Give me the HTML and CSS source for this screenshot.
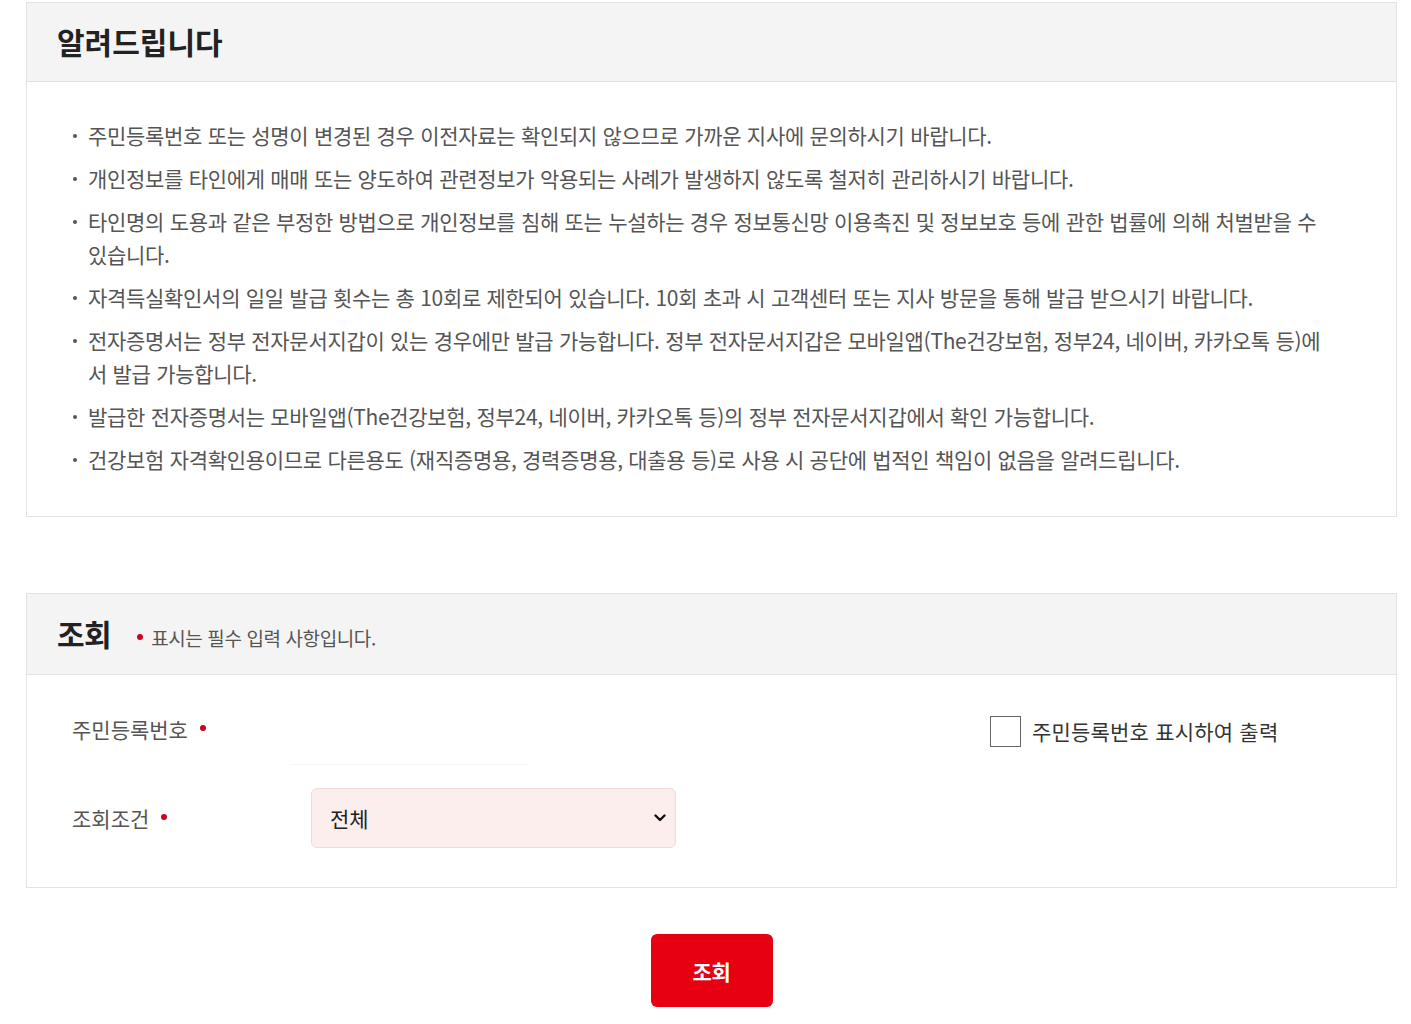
FILE: index.html
```html
<!DOCTYPE html>
<html lang="ko">
<head>
<meta charset="utf-8">
<title>알려드립니다</title>
<link rel="stylesheet" href="styles.css">
</head>
<body>
<div class="page">
  <section class="box notice">
    <div class="box-head">
      <h2 class="box-title">알려드립니다</h2>
    </div>
    <div class="notice-body">
      <ul class="notice-list">
        <li>주민등록번호 또는 성명이 변경된 경우 이전자료는 확인되지 않으므로 가까운 지사에 문의하시기 바랍니다.</li>
        <li>개인정보를 타인에게 매매 또는 양도하여 관련정보가 악용되는 사례가 발생하지 않도록 철저히 관리하시기 바랍니다.</li>
        <li>타인명의 도용과 같은 부정한 방법으로 개인정보를 침해 또는 누설하는 경우 정보통신망 이용촉진 및 정보보호 등에 관한 법률에 의해 처벌받을 수 있습니다.</li>
        <li>자격득실확인서의 일일 발급 횟수는 총 10회로 제한되어 있습니다. 10회 초과 시 고객센터 또는 지사 방문을 통해 발급 받으시기 바랍니다.</li>
        <li>전자증명서는 정부 전자문서지갑이 있는 경우에만 발급 가능합니다. 정부 전자문서지갑은 모바일앱(The건강보험, 정부24, 네이버, 카카오톡 등)에서 발급 가능합니다.</li>
        <li>발급한 전자증명서는 모바일앱(The건강보험, 정부24, 네이버, 카카오톡 등)의 정부 전자문서지갑에서 확인 가능합니다.</li>
        <li>건강보험 자격확인용이므로 다른용도 (재직증명용, 경력증명용, 대출용 등)로 사용 시 공단에 법적인 책임이 없음을 알려드립니다.</li>
      </ul>
    </div>
  </section>

  <section class="box search">
    <div class="box-head">
      <h2 class="box-title">조회</h2>
      <p class="req-note"><span class="dot"></span>표시는 필수 입력 사항입니다.</p>
    </div>
    <div class="form-body">
      <div class="form-row">
        <div class="form-label">주민등록번호<span class="dot"></span></div>
        <div class="form-field field-blank"><span class="ghost-input"></span></div>
        <label class="check">
          <input type="checkbox" class="check-input">
          <span class="check-box"></span>
          <span class="check-text">주민등록번호 표시하여 출력</span>
        </label>
      </div>
      <div class="form-row">
        <div class="form-label">조회조건<span class="dot"></span></div>
        <div class="form-field">
          <div class="select-wrap">
            <select class="select">
              <option>전체</option>
            </select>
            <svg class="chev" viewBox="0 0 12 8" width="12" height="8"><path d="M1.5 1.5 L6 6 L10.5 1.5" fill="none" stroke="#111" stroke-width="2.4" stroke-linecap="round" stroke-linejoin="round"/></svg>
          </div>
        </div>
      </div>
    </div>
  </section>

  <div class="actions">
    <button type="button" class="btn-primary">조회</button>
  </div>
</div>
</body>
</html>
```

FILE: styles.css
```css
* { box-sizing: border-box; }
html, body { margin: 0; padding: 0; background: #fff; }
body {
  font-family: "Noto Sans CJK KR", "Noto Sans", sans-serif;
  color: #333;
}
.page {
  padding: 2px 14px 0 26px;
}
.box {
  border: 1px solid #e3e3e3;
  background: #fff;
}
.box-head {
  height: 79px;
  background: #f4f4f4;
  border-bottom: 1px solid #e3e3e3;
  display: flex;
  align-items: center;
  padding: 0 0 0 30px;
}
.box-title {
  margin: -3px 0 0;
  font-size: 30px;
  font-weight: 700;
  color: #222;
  letter-spacing: 0;
  line-height: 1;
}
.notice-body {
  padding: 37px 64px 40px 46px;
}
.notice-list {
  list-style: none;
  margin: 0;
  padding: 0;
}
.notice-list li {
  position: relative;
  padding-left: 15px;
  font-size: 21px;
  line-height: 33px;
  color: #555;
  letter-spacing: -0.3px;
  margin-bottom: 10px;
}
.notice-list li:last-child { margin-bottom: 0; }
.notice-list li::before {
  content: "";
  position: absolute;
  left: 0;
  top: 15px;
  width: 4px;
  height: 4px;
  border-radius: 50%;
  background: #555;
}
.search { margin-top: 76px; }
.search .box-head { padding-left: 30px; height: 81px; }
.search .box-title { letter-spacing: -0.5px; }
.req-note {
  margin: 6px 0 0 26px;
  font-size: 19px;
  color: #555;
  letter-spacing: -0.4px;
  display: flex;
  align-items: center;
}
.dot {
  display: inline-block;
  width: 6px;
  height: 6px;
  border-radius: 50%;
  background: #d0021b;
  flex: none;
}
.req-note .dot { margin-right: 8px; }
.form-body {
  padding: 24px 0 39px 45px;
  display: flex;
  flex-direction: column;
  gap: 29px;
}
.form-row {
  display: flex;
  align-items: center;
  height: 60px;
}
.form-label {
  width: 239px;
  font-size: 21px;
  color: #555;
  letter-spacing: 0;
  display: flex;
  align-items: center;
  flex: none;
}
.form-label .dot { margin-left: 12px; margin-top: -3px; }
.form-field { width: 365px; flex: none; }
.field-blank { height: 60px; position: relative; }
.ghost-input {
  display: block;
  margin: 0 0 0 -21px;
  width: 238px;
  height: 66px;
  border-bottom: 1px solid #f6f6f6;
}
.check {
  margin-left: 314px;
  display: flex;
  align-items: center;
  gap: 11px;
  cursor: pointer;
  margin-top: 4px;
}
.check-input { position: absolute; opacity: 0; width: 0; height: 0; }
.check-box {
  width: 31px;
  height: 31px;
  border: 1.5px solid #666;
  background: #fff;
}
.check-text {
  font-size: 21px;
  color: #333;
  letter-spacing: 0.2px;
}
.select-wrap {
  position: relative;
  width: 365px;
  height: 60px;
}
.select {
  -webkit-appearance: none;
  appearance: none;
  width: 100%;
  height: 100%;
  border: 1px solid #f3dada;
  border-radius: 6px;
  background: #fdeeee;
  padding: 0 40px 0 18px;
  font-family: "Noto Sans CJK KR", "Noto Sans", sans-serif;
  font-size: 21px;
  color: #222;
  letter-spacing: 0;
  outline: none;
}
.chev {
  position: absolute;
  right: 10px;
  top: 26px;
  pointer-events: none;
}
.actions {
  display: flex;
  justify-content: center;
  padding: 46px 0 0;
}
.btn-primary {
  width: 122px;
  height: 73px;
  border: none;
  border-radius: 6px;
  background: #e60012;
  color: #fff;
  font-family: "Noto Sans CJK KR", "Noto Sans", sans-serif;
  font-size: 21px;
  font-weight: 700;
  letter-spacing: -0.3px;
  cursor: pointer;
}
```
